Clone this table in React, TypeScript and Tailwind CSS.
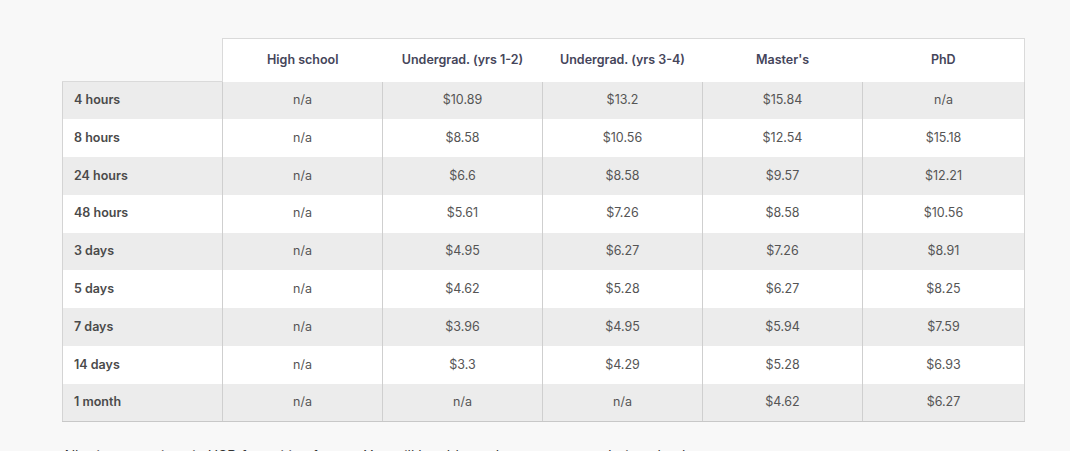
const columns = ["High school", "Undergrad. (yrs 1-2)", "Undergrad. (yrs 3-4)", "Master's", "PhD"];

const rows: [string, string[]][] = [
  ["4 hours", ["n/a", "$10.89", "$13.2", "$15.84", "n/a"]],
  ["8 hours", ["n/a", "$8.58", "$10.56", "$12.54", "$15.18"]],
  ["24 hours", ["n/a", "$6.6", "$8.58", "$9.57", "$12.21"]],
  ["48 hours", ["n/a", "$5.61", "$7.26", "$8.58", "$10.56"]],
  ["3 days", ["n/a", "$4.95", "$6.27", "$7.26", "$8.91"]],
  ["5 days", ["n/a", "$4.62", "$5.28", "$6.27", "$8.25"]],
  ["7 days", ["n/a", "$3.96", "$4.95", "$5.94", "$7.59"]],
  ["14 days", ["n/a", "$3.3", "$4.29", "$5.28", "$6.93"]],
  ["1 month", ["n/a", "n/a", "n/a", "$4.62", "$6.27"]],
];

export default function App() {
  return (
    <div
      className="w-[1070px] h-[451px] overflow-hidden bg-[#f8f8f8] pl-[62px] pt-[38px]"
      style={{ fontFamily: "Inter, 'Noto Sans', sans-serif" }}
    >
      <table className="border-collapse table-fixed w-[962px]">
        <colgroup>
          <col className="w-[160px]" />
          <col className="w-[160px]" />
          <col className="w-[160px]" />
          <col className="w-[160px]" />
          <col className="w-[160px]" />
          <col className="w-[162px]" />
        </colgroup>
        <thead>
          <tr className="h-[43px]">
            <th className="border-b border-[#dadada]"></th>
            {columns.map((c, i) => (
              <th
                key={c}
                className={
                  "bg-white border-t border-[#dadada] text-[12.5px] font-semibold text-[#45455a] text-center " +
                  (i === 0 ? "border-l " : "") +
                  (i === columns.length - 1 ? "border-r" : "")
                }
              >
                {c}
              </th>
            ))}
          </tr>
        </thead>
        <tbody>
          {rows.map(([label, vals], r) => {
            const last = r === rows.length - 1;
            return (
              <tr
                key={label}
                className={"h-[37.8px] " + (r % 2 === 0 ? "bg-[#ececec]" : "bg-white")}
              >
                <td
                  className={
                    "border-l border-[#d4d4d4] pl-[11px] text-[12.5px] font-semibold text-[#4a4a4a] " +
                    (last ? "border-b border-b-[#c8c8c8]" : "")
                  }
                >
                  {label}
                </td>
                {vals.map((v, i) => (
                  <td
                    key={i}
                    className={
                      "border-l border-[#cfcfcf] text-center text-[12.5px] text-[#555] " +
                      (i === vals.length - 1 ? "border-r border-r-[#d4d4d4] " : "") +
                      (last ? "border-b border-b-[#c8c8c8]" : "")
                    }
                  >
                    {v}
                  </td>
                ))}
              </tr>
            );
          })}
        </tbody>
      </table>
      <p className="mt-[23px] text-[14px] text-[#333]">
        All prices are given in USD for writing 1 page. You will be able to choose currency during checkout.
      </p>
    </div>
  );
}
